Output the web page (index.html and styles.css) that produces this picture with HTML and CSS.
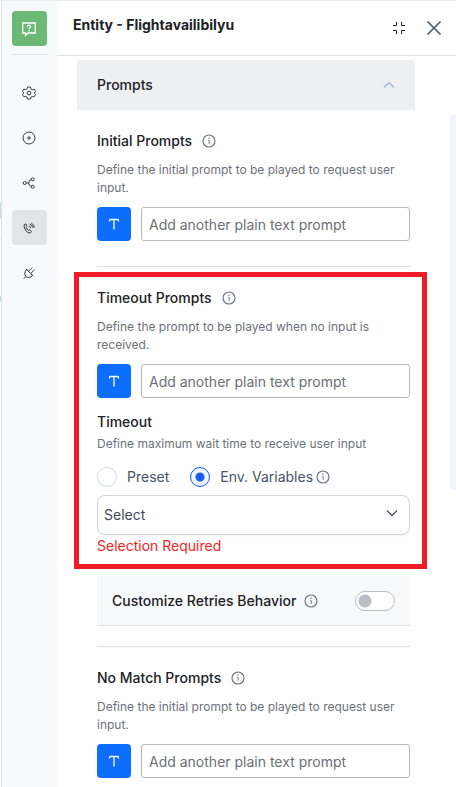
FILE: index.html
```html
<!DOCTYPE html>
<html lang="en">
<head>
<meta charset="utf-8">
<meta name="viewport" content="width=device-width, initial-scale=1">
<title>Entity - Flightavailibilyu</title>
<link rel="stylesheet" href="styles.css">
</head>
<body>
<svg class="defs" aria-hidden="true">
  <symbol id="info" viewBox="0 0 14 14"><circle cx="7" cy="7" r="6" fill="none" stroke="currentColor" stroke-width="1.200"/><path d="M6.300 6.400H7.200V9.800" fill="none" stroke="currentColor"/><circle cx="7" cy="4.300" r=".7" fill="currentColor"/></symbol>
  <symbol id="text" viewBox="0 0 12 12"><path d="M1.500 3.500V2.500Q1.500 1.500 2.500 1.500H9.500Q10.500 1.500 10.500 2.500V3.500M6 1.500V11.500" fill="none" stroke="currentColor" stroke-width="1.300"/></symbol>
</svg>
<div class="app">
  <div class="canvas-edge"></div>
  <nav class="rail" aria-label="Entity settings">
    <div class="rail-top">
      <button class="entity" aria-label="Entity"><svg width="16" height="16" viewBox="0 0 16 16" fill="none" stroke="currentColor" stroke-width="1.300"><path d="M1.700 2H14.300V12H7L4.500 14.300V12H1.700Z"/><path d="M6.400 5.700C6.400 3.700 9.600 3.700 9.600 5.600C9.600 6.700 8 6.800 8 8.200M8 9.200V10.500"/></svg></button>
    </div>
    <button aria-label="General settings"><svg width="14" height="14" viewBox="0 0 14 14" fill="none" stroke="currentColor"><path d="M5.600 1H8.400L9 2.900L10.300 3.600L12.200 3.200L13.500 5.500L12.200 7L13.500 8.500L12.200 10.800L10.300 10.400L9 11.100L8.400 13H5.600L5 11.100L3.700 10.400L1.800 10.800L.5 8.500L1.800 7L.5 5.500L1.800 3.200L3.700 3.600L5 2.900Z" stroke-linejoin="round"/><circle cx="7" cy="7" r="1.900"/></svg></button>
    <button aria-label="Instance"><svg width="14" height="14" viewBox="0 0 14 14" fill="none" stroke="currentColor"><circle cx="7" cy="7" r="6"/><circle cx="7" cy="7" r="1.200"/></svg></button>
    <button aria-label="Connections"><svg width="14" height="14" viewBox="0 0 14 14" fill="none" stroke="currentColor"><circle cx="2.700" cy="7" r="1.500"/><circle cx="10.700" cy="3.300" r="1.500"/><circle cx="10.700" cy="10.700" r="1.500"/><path d="M4.200 7H6.500M9.300 3.500Q6.700 4 6.700 7T9.300 10.500"/></svg></button>
    <button class="active" aria-label="Voice prompts"><svg width="14" height="14" viewBox="0 0 14 14" fill="none" stroke="currentColor"><path d="M3.900 3L5.100 5.400L4.300 6.500Q4.900 8.400 6.500 9.400L7.700 8.800L9.500 10.500L8.100 12.100Q5.500 12.300 3.500 8.900Q1.500 5.800 2.200 3.500Z" stroke-linejoin="round"/><path d="M7.100 5.100Q8.500 5.500 8.600 7.200M7.500 3Q10.200 3.500 10.700 6.700M9.300 2.200Q12 3.400 12.300 6.600"/></svg></button>
    <button aria-label="Extensions"><svg width="14" height="14" viewBox="0 0 14 14" fill="none" stroke="currentColor"><path d="M1.800 12.700L3.700 10.600M4.700 3.600L10.500 9.300Q9 11.500 6.800 11.500Q5 11.600 3.700 10.400Q2.500 9 2.800 7Q3.100 5 4.700 3.600M4 2.900L5.500 4.400M9.700 8.700L11.300 10.200M6.500 5.300L9.500 2.400M8.700 7.500L12 4.300M9.500 2.400L10.400 1.600M12 4.300L12.800 3.500"/></svg></button>
  </nav>
  <main class="panel">
    <header class="panel-head">
      <h1>Entity - Flightavailibilyu</h1>
      <button aria-label="Collapse panel"><svg width="12" height="12" viewBox="0 0 12 12" fill="none" stroke="#17172b"><path d="M0 3.500H3.500V0M8.500 0V3.500H12M0 8.500H3.500V12M12 8.500H8.500V12"/></svg></button>
      <button class="close" aria-label="Close"><svg width="14" height="14" viewBox="0 0 14 14" fill="none" stroke="#52657b" stroke-width="1.600"><path d="M.5 .5L13.500 13.500M13.500 .5L.5 13.500"/></svg></button>
    </header>
    <div class="panel-body">
      <div class="content">
        <button class="accordion" aria-expanded="true"><span>Prompts</span><svg width="12" height="8" viewBox="0 0 12 8" fill="none" stroke="#8fb3f0" stroke-width="1.200"><path d="M1 6.500L6 1.500L11 6.500"/></svg></button>
        <div class="sections">
          <section>
            <h2>Initial Prompts <svg class="info"><use href="#info"/></svg></h2>
            <p class="desc">Define the initial prompt to be played to request user input.</p>
            <div class="prompt-row"><button class="type" aria-label="Plain text"><svg><use href="#text"/></svg></button><input type="text" aria-label="Initial prompt" placeholder="Add another plain text prompt"></div>
          </section>
          <hr class="after-row">
          <section class="highlight">
            <h2>Timeout Prompts <svg class="info"><use href="#info"/></svg></h2>
            <p class="desc">Define the prompt to be played when no input is received.</p>
            <div class="prompt-row"><button class="type" aria-label="Plain text"><svg><use href="#text"/></svg></button><input type="text" aria-label="Timeout prompt" placeholder="Add another plain text prompt"></div>
            <div class="timeout">
              <h2>Timeout</h2>
              <p class="desc">Define maximum wait time to receive user input</p>
              <div class="radios">
                <label><input type="radio" name="timeout">Preset</label>
                <label><input type="radio" name="timeout" checked>Env. Variables</label>
                <svg class="info"><use href="#info"/></svg>
              </div>
              <div class="select">
                <select aria-label="Environment variable"><option>Select</option></select>
                <svg width="12" height="8" viewBox="0 0 12 8" fill="none" stroke="#4b5563" stroke-width="1.400"><path d="M1 1.500L6 6.500L11 1.500"/></svg>
              </div>
              <p class="error">Selection Required</p>
            </div>
          </section>
          <div class="retries">
            <label for="retries">Customize Retries Behavior</label><svg class="info"><use href="#info"/></svg>
            <input id="retries" type="checkbox" role="switch">
          </div>
          <hr>
          <section>
            <h2>No Match Prompts <svg class="info"><use href="#info"/></svg></h2>
            <p class="desc">Define the initial prompt to be played to request user input.</p>
            <div class="prompt-row"><button class="type" aria-label="Plain text"><svg><use href="#text"/></svg></button><input type="text" aria-label="No match prompt" placeholder="Add another plain text prompt"></div>
          </section>
        </div>
      </div>
      <div class="track"></div>
    </div>
  </main>
</div>
</body>
</html>
```
FILE: styles.css
```css
* { box-sizing: border-box; }
body { margin: 0; font-family: Inter, "Liberation Sans", sans-serif; font-size: 14px; line-height: 20px; color: #202124; background: #fff; }
h1, h2, p { margin: 0; }
button { font: inherit; color: inherit; border: 0; padding: 0; background: none; display: flex; align-items: center; justify-content: center; cursor: pointer; }
svg { display: block; flex: none; }
.defs { display: none; }
.app { display: flex; min-height: 100vh; border-top: 1px solid #e8eaec; }
.canvas-edge { width: 2px; border-right: 1px solid #dfe2e6; background: linear-gradient(#fff 202px, #cbd9ec 202px, #cbd9ec 218px, #fff 218px, #fff 237px, #c8e4fa 237px, #c8e4fa 238px, #fff 238px, #fff 295px, #c5d5e8 295px, #c5d5e8 300px, #fff 300px); }
.rail { width: 55px; flex: none; background: #f8f9fb; padding: 10px; display: flex; flex-direction: column; gap: 10px; color: #343a46; }
.rail button { width: 35px; height: 35px; padding-right: 1px; border-radius: 4px; }
.rail-top { border-bottom: 1px solid #dee1e4; padding-bottom: 8px; margin-bottom: 10px; }
.rail .entity { background: #6ab975; color: #fff; }
.rail .active { background: #e3e4e6; }
.panel { flex: 1; min-width: 0; }
.panel-head { display: flex; align-items: center; height: 55px; padding: 0 15px 0 16px; border-bottom: 1px solid #dfe1e4; }
h1 { flex: 1; font-size: 14px; font-weight: 700; line-height: 20px; margin-bottom: 6px; }
.close { margin-left: 22px; }
.panel-body { display: flex; padding-top: 4px; }
.content { flex: 1; min-width: 0; padding: 0 35px 0 20px; }
.accordion { width: 100%; height: 50px; padding: 0 20px; justify-content: space-between; background: #eeeff1; border-radius: 4px 4px 0 0; font-weight: 500; }
.track { width: 6px; height: 375px; margin-top: 55px; background: #f3f4f9; border-radius: 3px 0 0 3px; }
.sections { padding: 21px 5px 9px 20px; }
h2 { display: flex; align-items: center; gap: 10px; font-size: 14px; font-weight: 500; line-height: 20px; }
.info { width: 14px; height: 14px; color: #6d7688; }
.desc { font-size: 12px; line-height: 18px; color: #6c7178; margin: 10px 0; }
.prompt-row { display: flex; gap: 10px; }
.type { width: 34px; height: 34px; border-radius: 4px; background: #0d6efd; color: #fff; }
.type svg { width: 12px; height: 12px; }
.prompt-row input { flex: 1; min-width: 0; height: 34px; border: 1px solid #b7b9bd; border-radius: 3px; padding: 0 7px; font: inherit; color: #202124; background: #fff; }
::placeholder { color: #6c7075; opacity: 1; }
hr { border: 0; border-top: 1px solid #dfe1e4; margin: 20px 0 21px; }
.after-row { margin-top: 25px; }
.highlight { position: relative; }
.highlight::after { content: ""; position: absolute; inset: -16px -17px -13px -23px; border: 5px solid #ee1c25; pointer-events: none; }
.timeout { padding-top: 14px; }
.timeout .desc { margin: 3px 0 14px; }
.radios { display: flex; align-items: center; color: #475467; }
.radios label { display: flex; align-items: center; gap: 10px; }
.radios label + label { margin-left: 21px; }
.radios .info { margin-left: 3px; }
input[type="radio"] { appearance: none; width: 20px; height: 20px; margin: 0; border: 1px solid #d0d5dd; border-radius: 50%; }
input[type="radio"]:checked { border-color: #155eef; background: radial-gradient(circle, #155eef 4px, #eff4ff 5px); }
.select { position: relative; margin-top: 8px; }
.select select { appearance: none; display: block; width: 100%; height: 40px; padding: 0 30px 0 6px; border: 1px solid #d0d5dd; border-radius: 8px; background: #fff; box-shadow: 0 1px 2px #1018280d; font: inherit; color: #3f4858; }
.select svg { position: absolute; right: 12px; top: 14px; pointer-events: none; }
.error { margin-top: 1px; color: #fb2424; }
.retries { display: flex; align-items: center; height: 50px; margin-top: 20px; padding: 0 15px; background: #f8f9fb; border-bottom: 1px solid #dfe1e5; font-weight: 500; }
.retries .info { margin-left: 8px; }
.retries input { appearance: none; width: 40px; height: 20px; margin: 0 0 0 auto; border: 1px solid #b9bcc0; border-radius: 10px; background: radial-gradient(circle at 9px 9px, #bdbfc4 6px, #fff 7px); }
```
